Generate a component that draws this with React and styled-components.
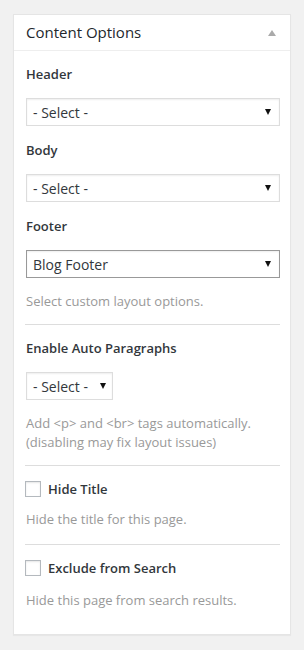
import React from 'react'
import styled, { createGlobalStyle } from 'styled-components'

const GlobalStyle = createGlobalStyle`
  html, body {
    margin: 0;
    padding: 0;
    background: #f1f1f1;
  }
  body {
    font-family: "Open Sans", "Liberation Sans", sans-serif;
    -webkit-font-smoothing: antialiased;
  }
`

const Page = styled.div`
  padding: 14px 13px;
`

const Box = styled.div`
  background: #fff;
  border: 1px solid #e5e5e5;
  box-shadow: 0 1px 1px rgba(0, 0, 0, 0.04);
`

const BoxHeader = styled.div`
  height: 35px;
  border-bottom: 1px solid #eee;
  display: flex;
  align-items: center;
  justify-content: space-between;
  padding: 0 12px;
`

const Title = styled.h2`
  margin: 0;
  font-size: 15px;
  font-weight: 400;
  line-height: 35px;
  color: #23282d;
`

const Toggle = styled.svg`
  width: 8px;
  height: 6px;
  margin-right: 2px;
  margin-top: 1px;
`

const Inside = styled.div`
  padding: 13px 10px 24px 12px;
`

const Label = styled.div`
  font-size: 13px;
  font-weight: 600;
  line-height: 20px;
  color: #32373c;
  margin-top: ${p => p.$top || 0}px;
  margin-bottom: 14px;
`

const SelectWrap = styled.div`
  position: relative;
  width: ${p => (p.$width ? `${p.$width}px` : '100%')};
  height: 28px;
  box-sizing: border-box;
  border: 1px solid ${p => (p.$dark ? '#999' : '#ddd')};
  box-shadow: inset 0 1px 2px rgba(0, 0, 0, 0.07);
  background: #fff;

  &::after {
    content: '';
    position: absolute;
    right: ${p => (p.$width ? 6 : 8)}px;
    top: 10px;
    border-left: 3px solid transparent;
    border-right: 3px solid transparent;
    border-top: 6px solid #111;
    pointer-events: none;
  }
`

const Select = styled.select`
  appearance: none;
  -webkit-appearance: none;
  width: 100%;
  height: 100%;
  border: 0;
  outline: none;
  background: transparent;
  padding: 0 20px 0 6px;
  margin: 0;
  font-family: "Open Sans", "Liberation Sans", sans-serif;
  font-size: 14px;
  color: #32373c;
`

const Gap = styled.div`
  height: 14px;
`

const Help = styled.p`
  margin: ${p => p.$top || 13}px 0 0;
  font-size: 13px;
  line-height: ${p => p.$lh || 20}px;
  color: #999;
`

const Divider = styled.hr`
  border: 0;
  border-top: 1px solid #ddd;
  margin: ${p => p.$top || 13}px 0 0 -1px;
  height: 0;
`

const CheckRow = styled.label`
  display: flex;
  align-items: center;
  gap: 7px;
  height: 20px;
  margin-top: 13px;
  margin-left: -1px;
  font-size: 13px;
  font-weight: 600;
  color: #32373c;
`

const Check = styled.span`
  width: 16px;
  height: 16px;
  box-sizing: border-box;
  border: 1px solid #b4b9be;
  background: #fff;
  box-shadow: inset 0 1px 2px rgba(0, 0, 0, 0.1);
`

function Dropdown({ value, width, dark }) {
  return (
    <SelectWrap $width={width} $dark={dark}>
      <Select defaultValue={value}>
        <option>- Select -</option>
        <option>Blog Footer</option>
      </Select>
    </SelectWrap>
  )
}

export default function App() {
  return (
    <>
      <GlobalStyle />
      <Page>
        <Box>
          <BoxHeader>
            <Title>Content Options</Title>
            <Toggle viewBox="0 0 8 6">
              <path d="M4 0 L8 6 L0 6 Z" fill="#aaa" />
            </Toggle>
          </BoxHeader>
          <Inside>
            <Label>Header</Label>
            <Dropdown value="- Select -" />
            <Gap />
            <Label>Body</Label>
            <Dropdown value="- Select -" />
            <Gap />
            <Label>Footer</Label>
            <Dropdown value="Blog Footer" dark />
            <Help>Select custom layout options.</Help>
            <Divider />
            <Label $top={13}>Enable Auto Paragraphs</Label>
            <Dropdown value="- Select -" width={87} />
            <Help $top={14} $lh={19}>
              Add &lt;p&gt; and &lt;br&gt; tags automatically.
              <br />
              (disabling may fix layout issues)
            </Help>
            <Divider $top={13} />
            <CheckRow>
              <Check />
              Hide Title
            </CheckRow>
            <Help $top={10}>Hide the title for this page.</Help>
            <Divider $top={15} />
            <CheckRow>
              <Check />
              Exclude from Search
            </CheckRow>
            <Help $top={12}>Hide this page from search results.</Help>
          </Inside>
        </Box>
      </Page>
    </>
  )
}
